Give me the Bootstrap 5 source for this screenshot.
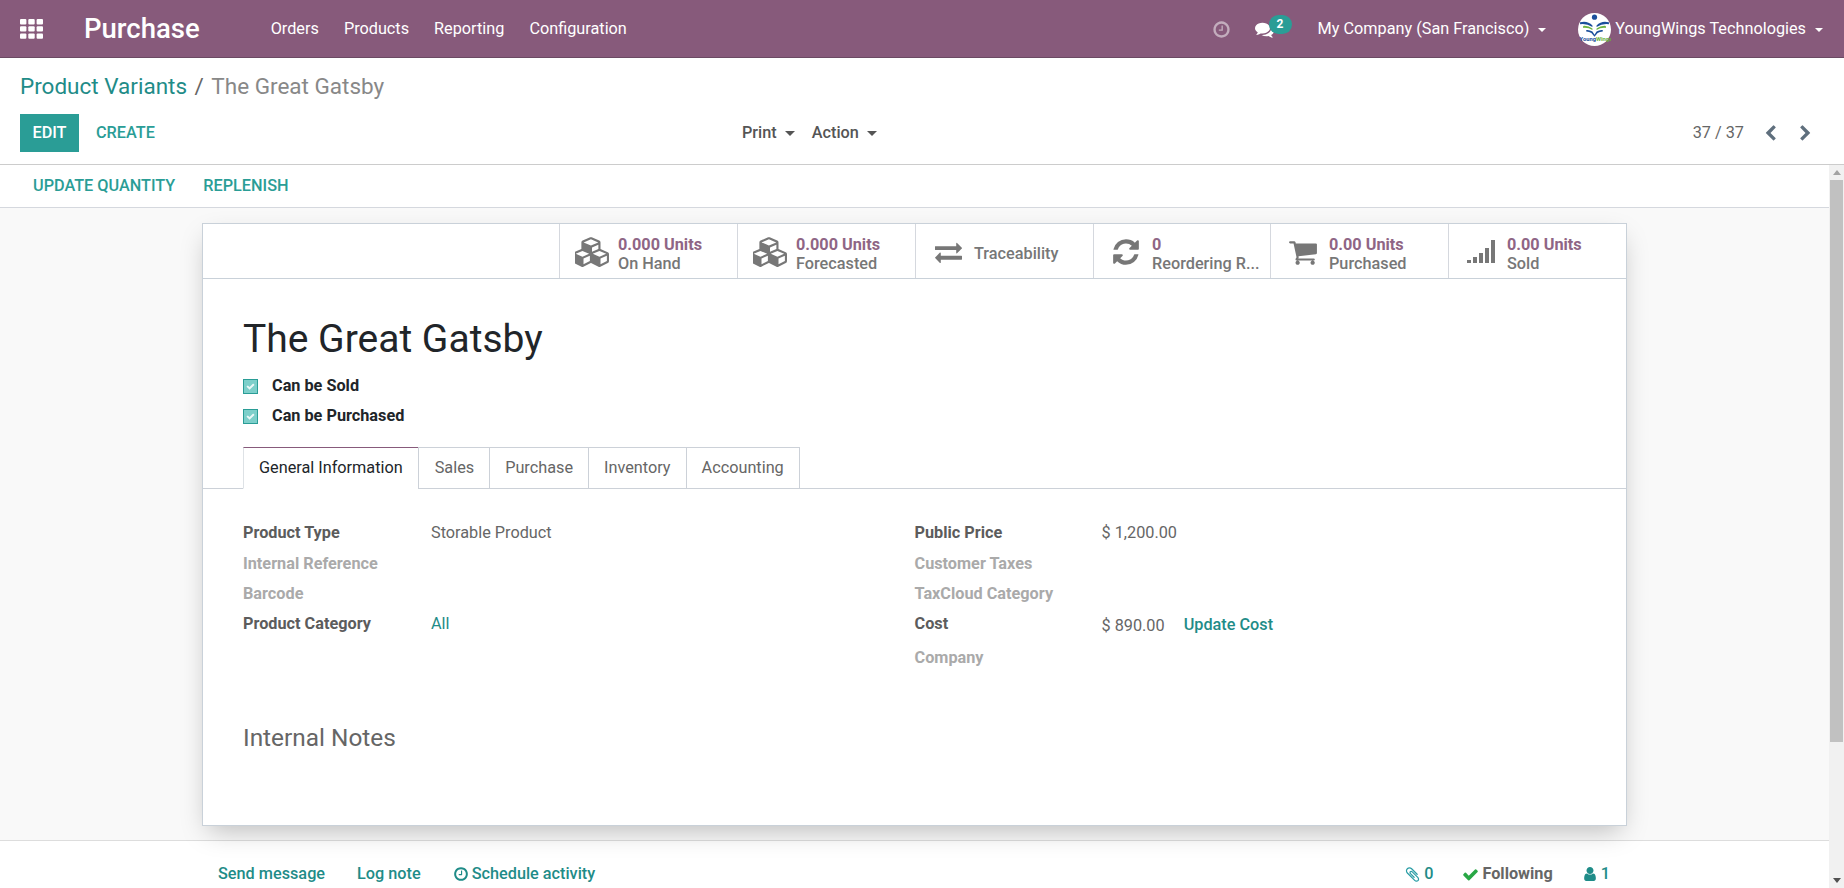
<!DOCTYPE html>
<html lang="en">

<head>
    <meta charset="UTF-8">
    <meta name="viewport" content="width=device-width, initial-scale=1.0">
    <title>The Great Gatsby - Purchase</title>
    <link href="https://cdn.jsdelivr.net/npm/bootstrap@5.3.0/dist/css/bootstrap.min.css" rel="stylesheet">
    <style>
        html, body { height: 888px; overflow: hidden; }
        body { font-family: Roboto, "Liberation Sans", sans-serif; font-size: 16.25px; color: #666; background: #fff; }
        svg { fill: currentColor; display: block; flex: none; }

        .top-bar { height: 58px; background: #875a7b; border-bottom: 1px solid #6b4a63; padding: 0 20px; flex-wrap: nowrap; justify-content: flex-start; }
        .apps-icon { width: 23px; height: 20px; color: #fff; margin-right: 41px; }
        .top-bar .navbar-brand { font-size: 27.5px; font-weight: 500; color: #fff; padding: 0; margin: 0 71px 0 0; line-height: 1; }
        .top-link { color: #fff; text-decoration: none; padding: 2px 0 0; margin-right: 25px; }
        .top-right { color: #fff; padding-top: 1px; margin-right: 1px; }
        .clock-top { width: 19px; height: 19px; color: #c3adbd; }
        .chat-wrap { margin-left: 24px; margin-right: 44px; }
        .chat-top { width: 19px; height: 19px; color: #fff; }
        .chat-badge { position: absolute; top: -5px; left: 14px; width: 23px; height: 19px; border-radius: 10px; background: #2a9d96; color: #fff; font-size: 12px; font-weight: 700; line-height: 19px; padding: 0; }
        .top-right .dropdown-toggle::after { margin-left: 9px; vertical-align: 2px; }
        .avatar { width: 33px; height: 33px; margin: 0 4px 0 32px; }

        .control-panel { height: 107px; border-bottom: 1px solid #ccc; padding: 0 30px 0 20px; }
        .crumbs { font-size: 22.5px; margin: 0; padding-top: 12px; height: 56px; --bs-breadcrumb-divider-color: #666; --bs-breadcrumb-item-padding-x: 7.5px; }
        .crumbs a { color: #1f8c88; text-decoration: none; }
        .crumbs .active { color: #888; }
        .btn-edit { background: #2a9d96; color: #fff; border: 0; border-radius: 0; width: 59px; height: 38px; padding: 0; font-size: 16.25px; font-weight: 500; }
        .btn-flat { color: #2a9d96; border: 0; border-radius: 0; background: none; padding: 0; font-size: 16.25px; font-weight: 500; }
        .create-btn { margin-left: 17px; }
        .cp-row { height: 38px; }
        .cp-left { width: 722px; }
        .cp-menus { gap: 17px; }
        .cp-menus span { color: #555; font-weight: 500; }
        .cp-menus .dropdown-toggle::after { margin-left: 8px; vertical-align: 2px; border-top-width: 5.5px; border-left-width: 5.5px; border-right-width: 5.5px; }
        .pager-arrow { width: 17px; height: 17px; margin-left: 18px; color: #5f6f7d; }

        .main-row { height: 723px; }
        .main-left { flex: 1; min-width: 0; }
        .action-bar { height: 43px; border-bottom: 1px solid #d5d8de; padding-left: 33px; gap: 28px; }
        .sheet-bg { height: 633px; background: #f9f9f9; border-bottom: 1px solid #ddd; padding-top: 15px; }
        .sheet { width: 1425px; height: 603px; margin-left: 202px; background: #fff; border: 1px solid #c9d1d9; box-shadow: 0 10px 25px -6px rgba(0,0,0,.25); border-radius: 0; }
        .stat-box { height: 55px; border-bottom: 1px solid #c9d1d9; justify-content: flex-end; flex-shrink: 0; }
        .stat-btn { width: 178px; height: 54px; border-left: 1px solid #d5d8de; gap: 9px; padding: 2px 0 0 15px; line-height: 19px; color: #777; font-weight: 500; white-space: nowrap; overflow: hidden; }
        .stat-btn:nth-child(4) { width: 177px; }
        .stat-btn > div { padding-top: 3px; }
        .stat-btn b { display: block; color: #8f6585; font-weight: 700; }
        .stat-btn svg { width: 34px; height: 30px; color: #777; }
        .stat-btn svg.swap-ic { padding: 1px 3px 1px 4px; }
        .sheet-body { padding: 0 40px; }
        .prod-title { font-size: 39px; font-weight: 400; color: #212529; line-height: 46px; margin: 37px 0 9px; }
        .chk-row { height: 30px; gap: 14px; color: #212529; font-weight: 700; }
        .chk-box { width: 15px; height: 15px; background: #7dcfca; border: 1px solid #2a9d96; color: #fff; padding: 2px; }
        .chk-box svg { width: 9px; height: 9px; opacity: .85; }
        .tab-wrap { margin-top: 16px; padding-left: 40px; --bs-nav-tabs-border-color: #ccd1d8; --bs-nav-tabs-border-radius: 0; --bs-nav-link-padding-x: 15px; --bs-nav-link-padding-y: 9px; --bs-nav-link-color: #666; height: 42px; }
        .tab-wrap .nav-link { height: 42px; margin: 0 -1px -1px 0; border-color: #ccd1d8; color: #666; padding-top: 8px; font-size: 16.25px; }
        .tab-wrap .nav-link.active { color: #212529; border-top-color: #875a7b; border-bottom-color: #fff; }
        .tab-wrap .nav-item:nth-child(2) .nav-link { padding-left: 16px; }
        .form-grid { margin: 0; padding-top: 29px; }
        .field-row { display: flex; height: 31px; align-items: center; }
        .field-row.low { height: 29px; }
        .field-row.tall { height: 36px; }
        .field-name { width: 188px; font-weight: 700; color: #5c5c5c; }
        .field-name.blank { color: #aaa; }
        .col-right .field-name { width: 187px; }
        .val-link { color: #1f8c88; text-decoration: none; }
        .cost-val { padding-top: 3px; }
        .update-cost { color: #1f8c88; font-weight: 500; margin-left: 19px; padding-top: 2px; text-decoration: none; }
        .notes-title { font-size: 24.4px; color: #666; font-weight: 400; margin: 47px 0 0; }

        .chatter { height: 46px; padding: 20px 0 0 218px; font-weight: 500; }
        .chatter a { color: #1f8c88; text-decoration: none; }
        .chat-left { gap: 32px; }
        .chat-left svg { width: 16px; height: 16px; margin-right: -1px; }
        .chat-right { margin-left: auto; padding-right: 219px; color: #1f8c88; }
        .chat-right svg { width: 17px; height: 17px; }
        .chat-right .clip-ic { color: #2a9da5; margin-right: 3px; }
        .chat-right .user-ic { width: 12px; height: 14px; margin-left: 31px; margin-right: 5px; }
        .chat-right .check-ic { margin-left: 29px; margin-right: 3px; color: #28a745; }
        .following-txt { color: #666; font-weight: 700; }

        .fake-scroll { width: 15px; background: #f1f1f1; }
        .sb-up, .sb-down { height: 15px; flex: none; }
        .sb-thumb { height: 562px; margin: 0 1px; background: #c1c1c1; }
        .sb-up::before, .sb-down::before { content: ""; display: block; margin: 5px auto 0; width: 0; height: 0; border-left: 4px solid transparent; border-right: 4px solid transparent; }
        .sb-up::before { border-bottom: 5px solid #a3a3a3; }
        .sb-down::before { border-top: 5px solid #505050; }
    </style>
</head>

<body>

<nav class="navbar top-bar d-flex align-items-center">
    <svg class="apps-icon" viewBox="0 0 23 20"><rect x="0" y="0" width="6.4" height="5.4" rx="1"/><rect x="8.3" y="0" width="6.4" height="5.4" rx="1"/><rect x="16.6" y="0" width="6.4" height="5.4" rx="1"/><rect x="0" y="7.2" width="6.4" height="5.4" rx="1"/><rect x="8.3" y="7.2" width="6.4" height="5.4" rx="1"/><rect x="16.6" y="7.2" width="6.4" height="5.4" rx="1"/><rect x="0" y="14.4" width="6.4" height="5.4" rx="1"/><rect x="8.3" y="14.4" width="6.4" height="5.4" rx="1"/><rect x="16.6" y="14.4" width="6.4" height="5.4" rx="1"/></svg>
    <a class="navbar-brand" href="#">Purchase</a>
    <a class="top-link" href="#">Orders</a>
    <a class="top-link" href="#">Products</a>
    <a class="top-link" href="#">Reporting</a>
    <a class="top-link" href="#">Configuration</a>
    <div class="top-right ms-auto d-flex align-items-center">
        <svg class="clock-top" viewBox="0 0 1792 1792"><path d="M1024 544v448q0 14-9 23t-23 9h-320q-14 0-23-9t-9-23v-64q0-14 9-23t23-9h224v-352q0-14 9-23t23-9h64q14 0 23 9t9 23zm416 352q0-148-73-273t-198-198-273-73-273 73-198 198-73 273 73 273 198 198 273 73 273-73 198-198 73-273zm224 0q0 209-103 385.5t-279.5 279.5-385.5 103-385.5-103-279.5-279.5-103-385.5 103-385.5 279.5-279.5 385.5-103 385.5 103 279.5 279.5 103 385.5z"/></svg>
        <div class="chat-wrap position-relative">
            <svg class="chat-top" viewBox="0 0 1792 1792"><path d="M1408 768q0 139-94 257t-256.5 186.5-353.5 68.5q-86 0-176-16-124 88-278 128-36 9-86 16h-3q-11 0-20.5-8t-11.5-21q-1-3-1-6.5t.5-6.5 2-6l2.5-5 3.5-5.5 4-5 4.5-5 4-4.5q5-6 23-25t26-29.5 22.5-29 25-38.5 20.5-44q-124-72-195-177t-71-224q0-139 94-257t256.5-186.5 353.5-68.5 353.5 68.5 256.5 186.5 94 257zm384 256q0 120-71 224.5t-195 176.5q10 24 20.5 44t25 38.5 22.5 29 26 29.5 23 25q1 1 4 4.5t4.5 5 4 5 3.5 5.5l2.5 5 2 6 .5 6.5-1 6.5q-3 14-13 22t-22 7q-50-7-86-16-154-40-278-128-90 16-176 16-271 0-472-132 58 4 88 4 161 0 309-45t264-129q125-92 192-212t67-254q0-77-23-152 129 71 204 178t75 230z"/></svg>
            <span class="badge chat-badge">2</span>
        </div>
        <span class="dropdown-toggle">My Company (San Francisco)</span>
        <svg class="avatar" viewBox="0 0 32 32">
            <circle cx="16" cy="16" r="16" fill="#fff"/>
            <circle cx="16" cy="4" r="2.5" fill="#1b4f9c"/>
            <path d="M2 9 Q9 7 14 12 L14 13.5 Q8 10 2 11z M30 9 Q23 7 18 12 L18 13.5 Q24 10 30 11z" fill="#1b4f9c"/>
            <path d="M5 12.5 Q10 12 14 15 L14 16.5 Q10 14 5 14.5z M27 12.5 Q22 12 18 15 L18 16.5 Q22 14 27 14.5z" fill="#6cb33f"/>
            <path d="M8 16.5 Q11 16 14 18 L16 21 L18 18 Q21 16 24 16.5 L24 18 Q21 18 19 19.5 L16 23 L13 19.5 Q11 18 8 18z" fill="#1b4f9c"/>
            <text x="1.5" y="27.5" font-size="5.6" font-weight="700" font-family="Roboto, sans-serif" fill="#1b4f9c">Young<tspan fill="#6cb33f">Wings</tspan></text>
        </svg>
        <span class="dropdown-toggle">YoungWings Technologies</span>
    </div>
</nav>

<div class="control-panel">
    <nav aria-label="breadcrumb">
        <ol class="breadcrumb crumbs">
            <li class="breadcrumb-item"><a href="#">Product Variants</a></li>
            <li class="breadcrumb-item active" aria-current="page">The Great Gatsby</li>
        </ol>
    </nav>
    <div class="cp-row d-flex align-items-center">
        <div class="cp-left d-flex align-items-center">
            <button class="btn btn-edit">EDIT</button>
            <button class="btn btn-flat create-btn">CREATE</button>
        </div>
        <div class="cp-menus d-flex align-items-center">
            <span class="dropdown-toggle">Print</span>
            <span class="dropdown-toggle">Action</span>
        </div>
        <div class="ms-auto d-flex align-items-center">
            <span>37 / 37</span>
            <svg class="pager-arrow" viewBox="0 0 1792 1792"><path d="M1427 301l-531 531 531 531q19 19 19 45t-19 45l-166 166q-19 19-45 19t-45-19l-742-742q-19-19-19-45t19-45l742-742q19-19 45-19t45 19l166 166q19 19 19 45t-19 45z"/></svg>
            <svg class="pager-arrow" viewBox="0 0 1792 1792"><path d="M1363 877l-742 742q-19 19-45 19t-45-19l-166-166q-19-19-19-45t19-45l531-531-531-531q-19-19-19-45t19-45l166-166q19-19 45-19t45 19l742 742q19 19 19 45t-19 45z"/></svg>
        </div>
    </div>
</div>

<div class="main-row d-flex">
    <div class="main-left">
        <div class="action-bar d-flex align-items-center">
            <button class="btn btn-flat">UPDATE QUANTITY</button>
            <button class="btn btn-flat">REPLENISH</button>
        </div>

        <div class="sheet-bg">
            <div class="card sheet">
                <div class="stat-box d-flex">
                    <div class="stat-btn d-flex align-items-center">
                        <svg viewBox="0 0 2048 1792"><path d="M512 1632l384-192v-314l-384 164v342zm-64-454l404-173-404-173-404 173zm1088 454l384-192v-314l-384 164v342zm-64-454l404-173-404-173-404 173zm-448-293l384-165v-266l-384 164v267zm-64-379l441-189-441-189-441 189zm1088 518v416q0 36-19 67t-52 47l-448 224q-25 14-57 14t-57-14l-448-224q-4-2-7-4-2 2-7 4l-448 224q-25 14-57 14t-57-14l-448-224q-33-16-52-47t-19-67v-416q0-38 21.5-70t56.5-48l434-186v-400q0-38 21.5-70t56.5-48l448-192q23-10 50-10t50 10l448 192q35 16 56.5 48t21.5 70v400l434 186q36 16 57 48t21 70z"/></svg>
                        <div><b>0.000 Units</b>On Hand</div>
                    </div>
                    <div class="stat-btn d-flex align-items-center">
                        <svg viewBox="0 0 2048 1792"><path d="M512 1632l384-192v-314l-384 164v342zm-64-454l404-173-404-173-404 173zm1088 454l384-192v-314l-384 164v342zm-64-454l404-173-404-173-404 173zm-448-293l384-165v-266l-384 164v267zm-64-379l441-189-441-189-441 189zm1088 518v416q0 36-19 67t-52 47l-448 224q-25 14-57 14t-57-14l-448-224q-4-2-7-4-2 2-7 4l-448 224q-25 14-57 14t-57-14l-448-224q-33-16-52-47t-19-67v-416q0-38 21.5-70t56.5-48l434-186v-400q0-38 21.5-70t56.5-48l448-192q23-10 50-10t50 10l448 192q35 16 56.5 48t21.5 70v400l434 186q36 16 57 48t21 70z"/></svg>
                        <div><b>0.000 Units</b>Forecasted</div>
                    </div>
                    <div class="stat-btn d-flex align-items-center">
                        <svg class="swap-ic" viewBox="0 0 1792 1792"><path d="M1792 1184v192q0 13-9.5 22.5t-22.5 9.5h-1376v192q0 13-9.5 22.5t-22.5 9.5q-12 0-24-10l-319-320q-9-9-9-22 0-14 9-23l320-320q9-9 23-9 13 0 22.5 9.5t9.5 22.5v192h1376q13 0 22.5 9.5t9.5 22.5zm0-544q0 14-9 23l-320 320q-9 9-23 9-13 0-22.5-9.5t-9.5-22.5v-192h-1376q-13 0-22.5-9.5t-9.5-22.5v-192q0-13 9.5-22.5t22.5-9.5h1376v-192q0-14 9-23t23-9q12 0 24 10l319 319q9 9 9 23z"/></svg>
                        <div>Traceability</div>
                    </div>
                    <div class="stat-btn d-flex align-items-center">
                        <svg viewBox="0 0 1792 1792"><path d="M1639 1056q0 5-1 7-64 268-268 434.5t-478 166.5q-146 0-282.5-55t-243.5-157l-129 129q-19 19-45 19t-45-19-19-45v-448q0-26 19-45t45-19h448q26 0 45 19t19 45-19 45l-137 137q71 66 161 102t187 36q134 0 250-65t186-179q11-17 53-117 8-23 30-23h192q13 0 22.5 9.5t9.5 22.5zm25-800v448q0 26-19 45t-45 19h-448q-26 0-45-19t-19-45 19-45l138-138q-148-137-349-137-134 0-250 65t-186 179q-11 17-53 117-8 23-30 23h-199q-13 0-22.5-9.5t-9.5-22.5v-7q65-268 270-434.5t480-166.5q146 0 284 55.5t245 156.5l130-129q19-19 45-19t45 19 19 45z"/></svg>
                        <div><b>0</b>Reordering R...</div>
                    </div>
                    <div class="stat-btn d-flex align-items-center">
                        <svg viewBox="0 0 1792 1792"><path d="M704 1536q0 52-38 90t-90 38-90-38-38-90 38-90 90-38 90 38 38 90zm896 0q0 52-38 90t-90 38-90-38-38-90 38-90 90-38 90 38 38 90zm128-1088v512q0 24-16.5 42.5t-40.5 21.5l-1044 122q13 60 13 70 0 16-24 64h920q26 0 45 19t19 45-19 45-45 19h-1024q-26 0-45-19t-19-45q0-11 8-31.5t16-36 21.5-40 15.5-29.5l-177-823h-204q-26 0-45-19t-19-45 19-45 45-19h256q16 0 28.5 6.5t19.5 15.5 13 24.5 8 26 5.5 29.5 4.5 26h1201q26 0 45 19t19 45z"/></svg>
                        <div><b>0.00 Units</b>Purchased</div>
                    </div>
                    <div class="stat-btn d-flex align-items-center">
                        <svg viewBox="0 0 34 30"><rect x="3" y="23" width="4" height="3"/><rect x="9" y="20" width="4" height="6"/><rect x="15" y="16" width="4" height="10"/><rect x="21" y="11" width="4" height="15"/><rect x="27" y="3" width="4" height="23"/></svg>
                        <div><b>0.00 Units</b>Sold</div>
                    </div>
                </div>

                <div class="sheet-body">
                    <h1 class="prod-title">The Great Gatsby</h1>
                    <div class="chk-row d-flex align-items-center"><span class="chk-box"><svg viewBox="0 0 1792 1792"><path d="M1671 566q0 40-28 68l-724 724-136 136q-28 28-68 28t-68-28l-136-136-362-362q-28-28-28-68t28-68l136-136q28-28 68-28t68 28l294 295 656-657q28-28 68-28t68 28l136 136q28 28 28 68z"/></svg></span>Can be Sold</div>
                    <div class="chk-row d-flex align-items-center"><span class="chk-box"><svg viewBox="0 0 1792 1792"><path d="M1671 566q0 40-28 68l-724 724-136 136q-28 28-68 28t-68-28l-136-136-362-362q-28-28-28-68t28-68l136-136q28-28 68-28t68 28l294 295 656-657q28-28 68-28t68 28l136 136q28 28 28 68z"/></svg></span>Can be Purchased</div>
                </div>

                <ul class="nav nav-tabs tab-wrap">
                    <li class="nav-item"><a class="nav-link active" href="#">General Information</a></li>
                    <li class="nav-item"><a class="nav-link" href="#">Sales</a></li>
                    <li class="nav-item"><a class="nav-link" href="#">Purchase</a></li>
                    <li class="nav-item"><a class="nav-link" href="#">Inventory</a></li>
                    <li class="nav-item"><a class="nav-link" href="#">Accounting</a></li>
                </ul>

                <div class="sheet-body">
                    <div class="row g-0 form-grid">
                        <div class="col-6">
                            <div class="field-row"><span class="field-name">Product Type</span><span>Storable Product</span></div>
                            <div class="field-row"><span class="field-name blank">Internal Reference</span></div>
                            <div class="field-row low"><span class="field-name blank">Barcode</span></div>
                            <div class="field-row"><span class="field-name">Product Category</span><a class="val-link" href="#">All</a></div>
                        </div>
                        <div class="col-6 col-right">
                            <div class="field-row"><span class="field-name">Public Price</span><span>$ 1,200.00</span></div>
                            <div class="field-row"><span class="field-name blank">Customer Taxes</span></div>
                            <div class="field-row low"><span class="field-name blank">TaxCloud Category</span></div>
                            <div class="field-row"><span class="field-name">Cost</span><span class="cost-val">$ 890.00</span><a class="update-cost" href="#">Update Cost</a></div>
                            <div class="field-row tall"><span class="field-name blank">Company</span></div>
                        </div>
                    </div>
                    <h2 class="notes-title">Internal Notes</h2>
                </div>
            </div>
        </div>

        <div class="chatter d-flex align-items-center">
            <div class="chat-left d-flex align-items-center">
                <a href="#">Send message</a>
                <a href="#">Log note</a>
                <a href="#" class="d-flex align-items-center gap-1"><svg viewBox="0 0 1792 1792"><path d="M1024 544v448q0 14-9 23t-23 9h-320q-14 0-23-9t-9-23v-64q0-14 9-23t23-9h224v-352q0-14 9-23t23-9h64q14 0 23 9t9 23zm416 352q0-148-73-273t-198-198-273-73-273 73-198 198-73 273 73 273 198 198 273 73 273-73 198-198 73-273zm224 0q0 209-103 385.5t-279.5 279.5-385.5 103-385.5-103-279.5-279.5-103-385.5 103-385.5 279.5-279.5 385.5-103 385.5 103 279.5 279.5 103 385.5z"/></svg>Schedule activity</a>
            </div>
            <div class="chat-right d-flex align-items-center">
                <svg class="clip-ic" viewBox="0 0 1792 1792"><path d="M1596 1385q0 117-79 196t-196 79q-135 0-235-100l-777-776q-113-115-113-271 0-159 110-270t269-111q158 0 273 113l605 606q10 10 10 22 0 16-30.5 46.5t-46.5 30.5q-13 0-23-10l-606-607q-79-77-181-77-106 0-179 75t-73 181q0 105 76 181l776 777q63 63 145 63 64 0 106-42t42-106q0-82-63-145l-581-581q-26-24-60-24-29 0-48 19t-19 48q0 32 25 59l410 410q10 10 10 22 0 16-31 47t-47 31q-12 0-22-10l-410-410q-63-61-63-149 0-82 57-139t139-57q88 0 149 63l581 581q100 98 100 235z"/></svg>
                <span>0</span>
                <svg class="check-ic" viewBox="0 0 1792 1792"><path d="M1671 566q0 40-28 68l-724 724-136 136q-28 28-68 28t-68-28l-136-136-362-362q-28-28-28-68t28-68l136-136q28-28 68-28t68 28l294 295 656-657q28-28 68-28t68 28l136 136q28 28 28 68z"/></svg>
                <span class="following-txt">Following</span>
                <svg class="user-ic" viewBox="256 128 1280 1536"><path d="M1536 1399q0 109-62.5 187t-150.5 78h-854q-88 0-150.5-78t-62.5-187q0-85 8.5-160.5t31.5-152 58.5-131 94-89 134.5-34.5q131 128 313 128t313-128q76 0 134.5 34.5t94 89 58.5 131 31.5 152 8.5 160.5zm-256-887q0 159-112.5 271.5t-271.5 112.5-271.5-112.5-112.5-271.5 112.5-271.5 271.5-112.5 271.5 112.5 112.5 271.5z"/></svg>
                <span>1</span>
            </div>
        </div>
    </div>

    <div class="fake-scroll d-flex flex-column">
        <div class="sb-up"></div>
        <div class="sb-thumb"></div>
        <div class="sb-down mt-auto"></div>
    </div>
</div>

</body>
</html>
